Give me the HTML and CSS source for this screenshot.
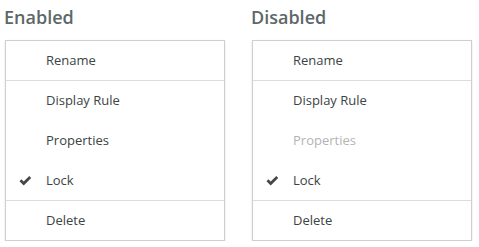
FILE: index.html
```html
<!DOCTYPE html>
<html lang="en">
<head>
    <meta charset="UTF-8">
    <title>Context menu states</title>
    <link rel="stylesheet" href="styles.css">
</head>
<body>
    <div class="demo">
        <div class="column">
            <h2 class="title">Enabled</h2>
            <ul class="menu">
                <li class="menu-item divided">Rename</li>
                <li class="menu-item">Display Rule</li>
                <li class="menu-item">Properties</li>
                <li class="menu-item divided checked">
                    <svg class="check" viewBox="0 0 13 10" width="13" height="10"><path d="M0.5 5.2 L2.4 3.3 L4.7 5.6 L10.3 0 L12.2 1.9 L4.7 9.4 Z" fill="#474747"/></svg>
                    Lock
                </li>
                <li class="menu-item">Delete</li>
            </ul>
        </div>
        <div class="column">
            <h2 class="title">Disabled</h2>
            <ul class="menu">
                <li class="menu-item divided">Rename</li>
                <li class="menu-item">Display Rule</li>
                <li class="menu-item disabled">Properties</li>
                <li class="menu-item divided checked">
                    <svg class="check" viewBox="0 0 13 10" width="13" height="10"><path d="M0.5 5.2 L2.4 3.3 L4.7 5.6 L10.3 0 L12.2 1.9 L4.7 9.4 Z" fill="#474747"/></svg>
                    Lock
                </li>
                <li class="menu-item">Delete</li>
            </ul>
        </div>
    </div>
</body>
</html>
```

FILE: styles.css
```css
body {
    margin: 0;
    font-family: "Open Sans", "Liberation Sans", sans-serif;
    background: #fff;
}
.demo {
    display: flex;
    gap: 26px;
    padding-left: 4px;
}
.column {
    width: 221px;
}
.title {
    margin: 5px 0 11px;
    font-size: 18px;
    line-height: 24px;
    font-weight: 600;
    color: #5d6769;
}
.menu {
    list-style: none;
    margin: 0 0 0 1px;
    padding: 0;
    width: 218px;
    border: 1px solid #cfcfcf;
    box-shadow: 0 1px 2px rgba(0,0,0,0.12);
}
.menu-item {
    position: relative;
    height: 39px;
    line-height: 39px;
    padding-left: 40px;
    font-size: 13px;
    color: #3b4345;
    border-bottom: 1px solid transparent;
}
.menu-item:last-child {
    border-bottom: none;
}
.menu-item.divided {
    border-bottom-color: #dcdcdc;
}
.menu-item.disabled {
    color: #b3b3b3;
}
.check {
    position: absolute;
    left: 13px;
    top: 15px;
}
```
